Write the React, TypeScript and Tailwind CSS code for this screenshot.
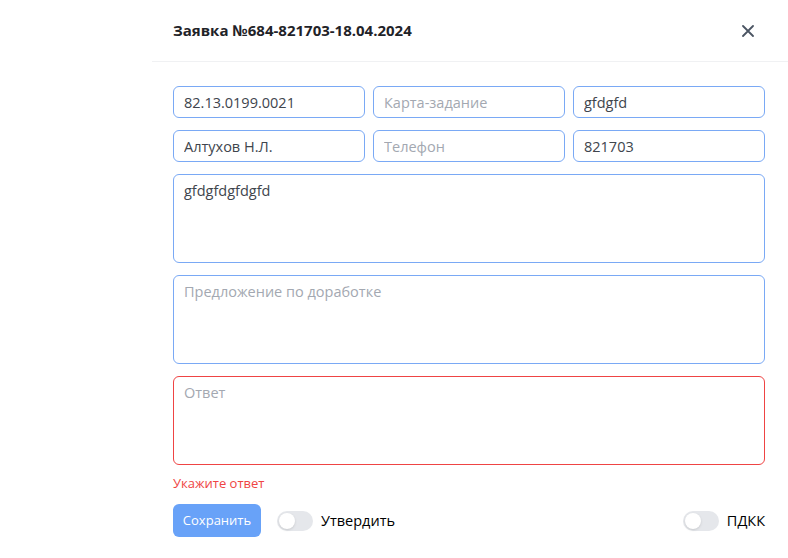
import { useState } from 'react'

function Toggle({ label }: { label: string }) {
  const [on, setOn] = useState(false)
  return (
    <label className="flex items-center gap-2 cursor-pointer select-none">
      <button
        type="button"
        onClick={() => setOn(!on)}
        className={`relative w-9 h-5 rounded-full transition ${on ? 'bg-[#66a1f7]' : 'bg-[#e5e7eb]'}`}
      >
        <span
          className={`absolute top-[2px] left-[2px] w-4 h-4 rounded-full bg-white shadow transition ${on ? 'translate-x-4' : ''}`}
        />
      </button>
      <span className="text-[14.5px] text-black">{label}</span>
    </label>
  )
}

export default function App() {
  const input =
    'h-8 w-full rounded-md border border-[#7aa9f5] px-[10px] text-[14.5px] text-[#40454d] placeholder:text-[#a3a8b1] outline-none'
  const area =
    'h-[89px] w-full rounded-md border border-[#7aa9f5] px-[10px] py-[5px] text-[14.5px] text-[#40454d] placeholder:text-[#a3a8b1] outline-none resize-none'

  return (
    <div className="min-h-screen bg-white flex font-['Open_Sans',sans-serif] overflow-hidden">
      <div className="w-[152px] shrink-0" />
      <div className="flex-1 min-w-0">
        {/* Header */}
        <div className="h-[62px] flex items-center justify-between pl-[21px] pr-[34px] border-b border-[#f0f1f3]">
          <h2 className="text-[15px] font-bold text-[#1f2328]">Заявка №684-821703-18.04.2024</h2>
          <svg width="12" height="12" viewBox="0 0 12 12" className="text-[#4b5563]">
            <path d="M1 1L11 11M11 1L1 11" stroke="currentColor" strokeWidth="1.8" strokeLinecap="round" />
          </svg>
        </div>

        <div className="pl-[21px] pr-[23px] pt-6 flex flex-col gap-3">
          <div className="grid grid-cols-3 gap-2">
            <input className={input} defaultValue="82.13.0199.0021" />
            <input className={`${input} border-[#4f8cf0]`} placeholder="Карта-задание" />
            <input className={input} defaultValue="gfdgfd" />
          </div>
          <div className="grid grid-cols-3 gap-2">
            <input className={input} defaultValue="Алтухов Н.Л." />
            <input className={input} placeholder="Телефон" />
            <input className={input} defaultValue="821703" />
          </div>
          <textarea className={area} defaultValue="gfdgfdgfdgfd" />
          <textarea className={area} placeholder="Предложение по доработке" />
          <div className="flex flex-col gap-[9px]">
            <textarea className={`${area} border-[#ef4444]`} placeholder="Ответ" />
            <span className="text-[13px] leading-[18px] text-[#ef4444]">Укажите ответ</span>
          </div>

          <div className="flex items-center justify-between">
            <div className="flex items-center gap-4">
              <button className="h-[33px] w-[88px] rounded-md bg-[#68a2f8] text-[13px] text-white">
                Сохранить
              </button>
              <Toggle label="Утвердить" />
            </div>
            <Toggle label="ПДКК" />
          </div>
        </div>
      </div>
    </div>
  )
}
